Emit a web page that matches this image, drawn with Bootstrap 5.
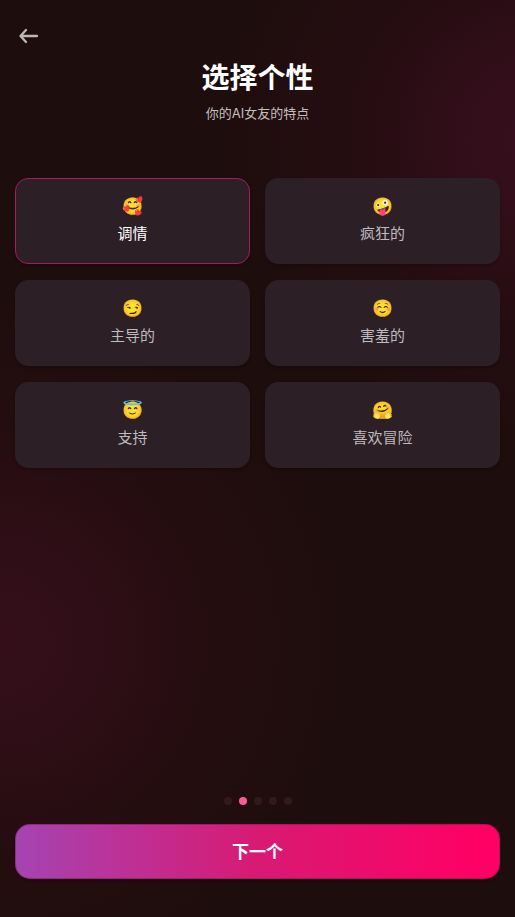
<!DOCTYPE html>
<html lang="zh-CN">
<head>
<meta charset="utf-8">
<meta name="viewport" content="width=device-width, initial-scale=1">
<title>选择个性</title>
<link href="https://cdn.jsdelivr.net/npm/bootstrap@5.3.0/dist/css/bootstrap.min.css" rel="stylesheet">
<style>
  body {
    font-family: Inter, "Noto Sans CJK SC", "Noto Color Emoji", sans-serif;
    color: #fff;
    background:
      radial-gradient(circle at 104% 15%, #390f1f 0, rgba(52, 14, 27, .85) 80px, rgba(44, 13, 20, .5) 190px, rgba(29, 13, 13, 0) 330px),
      radial-gradient(circle at 0% 70%, #340f1a 0, rgba(50, 14, 24, .85) 100px, rgba(42, 13, 18, .5) 220px, rgba(29, 13, 13, 0) 370px),
      #1d0d0d;
  }
  .page-shell { padding: 24px 15px 38px; }
  .back-btn { width: 24px; height: 24px; margin-left: 2px; }
  .page-title { font-size: 28px; line-height: 40px; margin-top: 10px; }
  .page-note { font-size: 13px; line-height: 20px; margin-top: 5px; color: #c4bebf; }
  .trait-grid { display: grid; grid-template-columns: 1fr 1fr; gap: 16px 15px; margin-top: 55px; }
  .trait {
    --bs-btn-color: #bfbabd;
    --bs-btn-bg: #2c1f26;
    --bs-btn-border-color: #2c1f26;
    --bs-btn-hover-color: #fff;
    --bs-btn-hover-bg: #34252d;
    --bs-btn-hover-border-color: #34252d;
    --bs-btn-active-color: #fff;
    --bs-btn-active-bg: #2c1f26;
    --bs-btn-active-border-color: #ac165f;
    --bs-btn-border-radius: 13px;
    --bs-btn-font-size: 15px;
    padding: 13px 8px 15px;
    box-shadow: 0 2px 3px rgba(0, 0, 0, .2);
  }
  .trait-face { font-family: "Noto Color Emoji", sans-serif; font-size: 17px; line-height: 28px; height: 28px; }
  .trait-name { line-height: 28px; }
  .step-dot { width: 8px; height: 8px; background: #31191e; }
  .step-dot.is-current { background: #ff5897; }
  .steps { gap: 7px; }
  .next-btn {
    margin-top: 19px;
    padding: 14px 12px 12px;
    font-size: 17px;
    line-height: 27px;
    color: #fff;
    border: 1px solid rgba(120, 20, 80, .5);
    border-radius: 15px;
    background: linear-gradient(90deg, #a544b3, #d81a73 50%, #ff0064 96%) border-box;
    box-shadow: 0 2px 3px rgba(0, 0, 0, .25);
  }
  .next-btn:hover { color: #fff; }
</style>
</head>
<body>
<main class="page-shell min-vh-100 d-flex flex-column">
  <header class="text-center">
    <button type="button" class="back-btn btn p-0 border-0 d-flex" aria-label="返回">
      <svg width="24" height="24" viewBox="0 0 24 24" fill="none" stroke="#bdb8b8" stroke-width="2.300" stroke-linecap="round" stroke-linejoin="round" aria-hidden="true">
        <path d="M20 12H4M9 6L3.500 12L9 18"/>
      </svg>
    </button>
    <h1 class="page-title fw-bold mb-0">选择个性</h1>
    <p class="page-note mb-0">你的AI女友的特点</p>
  </header>

  <div class="trait-grid" role="radiogroup" aria-label="选择个性">
    <div class="d-grid"><input class="btn-check" type="radio" name="trait" id="t1" checked><label class="trait btn d-flex flex-column align-items-center" for="t1"><span class="trait-face">🥰</span><span class="trait-name">调情</span></label></div>
    <div class="d-grid"><input class="btn-check" type="radio" name="trait" id="t2"><label class="trait btn d-flex flex-column align-items-center" for="t2"><span class="trait-face">🤪</span><span class="trait-name">疯狂的</span></label></div>
    <div class="d-grid"><input class="btn-check" type="radio" name="trait" id="t3"><label class="trait btn d-flex flex-column align-items-center" for="t3"><span class="trait-face">😏</span><span class="trait-name">主导的</span></label></div>
    <div class="d-grid"><input class="btn-check" type="radio" name="trait" id="t4"><label class="trait btn d-flex flex-column align-items-center" for="t4"><span class="trait-face">☺️</span><span class="trait-name">害羞的</span></label></div>
    <div class="d-grid"><input class="btn-check" type="radio" name="trait" id="t5"><label class="trait btn d-flex flex-column align-items-center" for="t5"><span class="trait-face">😇</span><span class="trait-name">支持</span></label></div>
    <div class="d-grid"><input class="btn-check" type="radio" name="trait" id="t6"><label class="trait btn d-flex flex-column align-items-center" for="t6"><span class="trait-face">🤗</span><span class="trait-name">喜欢冒险</span></label></div>
  </div>

  <footer class="mt-auto">
    <div class="steps d-flex justify-content-center" role="img" aria-label="第 2 步，共 5 步">
      <span class="step-dot rounded-circle"></span>
      <span class="step-dot is-current rounded-circle"></span>
      <span class="step-dot rounded-circle"></span>
      <span class="step-dot rounded-circle"></span>
      <span class="step-dot rounded-circle"></span>
    </div>
    <button type="button" class="next-btn btn w-100 fw-bold">下一个</button>
  </footer>
</main>
<script src="https://cdn.jsdelivr.net/npm/bootstrap@5.3.0/dist/js/bootstrap.bundle.min.js"></script>
</body>
</html>
